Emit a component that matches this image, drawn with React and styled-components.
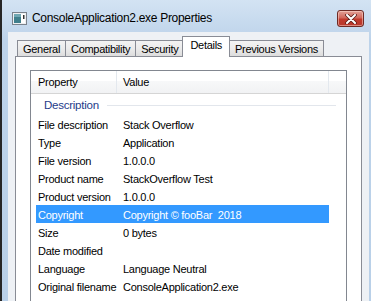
import React from "react";
import styled, { createGlobalStyle } from "styled-components";

const GlobalStyle = createGlobalStyle`
  html, body {
    margin: 0;
    padding: 0;
  }
  body {
    width: 371px;
    height: 301px;
    overflow: hidden;
    background: #ffffff;
    font-family: "Liberation Sans", Arial, sans-serif;
  }
`;

const Desktop = styled.div`
  display: flex;
  height: 301px;
  overflow: hidden;
`;

const DesktopEdge = styled.div`
  width: 2px;
  background: #262626;
`;

const Window = styled.div`
  flex: 1;
  display: flex;
  flex-direction: column;
  background: linear-gradient(#d3e3f3, #bdd3ea 40px, #b9d0e8);
`;

const TitleBar = styled.div`
  height: 32px;
  box-sizing: border-box;
  display: flex;
  align-items: flex-start;
  padding: 10px 7px 0 10px;
`;

const TitleIcon = styled.svg`
  width: 15px;
  height: 13px;
  margin-top: 2px;
  flex-shrink: 0;
`;

const TitleText = styled.div`
  flex: 1;
  margin-left: 5px;
  font-size: 12px;
  letter-spacing: -0.3px;
  line-height: 17px;
  color: #000;
`;

const CloseButton = styled.div`
  width: 27px;
  height: 17px;
  box-sizing: border-box;
  border: 1px solid #6e2a24;
  border-radius: 3px;
  background: linear-gradient(#e2a197, #d2675b 45%, #c1392c 55%, #b8392e);
  box-shadow: inset 0 0 0 1px rgba(255, 220, 210, 0.5);
  display: flex;
  align-items: center;
  justify-content: center;
`;

const Client = styled.div`
  flex: 1;
  display: flex;
  flex-direction: column;
  margin: 0 2px 0 6px;
  background: #eef1f5;
  padding: 5px 7px 0 7px;
  min-height: 0;
`;

const TabRow = styled.div`
  display: flex;
  align-items: flex-end;
  height: 20px;
  padding-left: 2px;
  margin-bottom: -1px;
  position: relative;
  z-index: 1;
`;

const Tab = styled.div`
  box-sizing: border-box;
  height: ${(p) => (p.$active ? "21px" : "17px")};
  padding: 0 ${(p) => (p.$active ? "7px" : "5px")};
  margin: 0 -1px 0 ${(p) => (p.$active ? "-1px" : "0")};
  border: 1px solid #898c95;
  border-bottom: ${(p) => (p.$active ? "none" : "1px solid #898c95")};
  background: ${(p) =>
    p.$active ? "#ffffff" : "linear-gradient(#f3f3f3, #ebebeb 50%, #dddddd)"};
  position: relative;
  z-index: ${(p) => (p.$active ? 2 : 1)};
  font-size: 11px;
  letter-spacing: -0.3px;
  line-height: 16px;
  color: #000;
  white-space: nowrap;
`;

const Panel = styled.div`
  flex: 1;
  border: 1px solid #898c95;
  border-bottom: none;
  background: #ffffff;
  padding: 13px 14px 0 14px;
  min-height: 0;
  overflow: hidden;
`;

const ListView = styled.div`
  border: 1px solid #828790;
  border-bottom: none;
  height: 100%;
  box-sizing: border-box;
  font-size: 11px;
  letter-spacing: -0.25px;
  color: #000;
`;

const Header = styled.div`
  display: flex;
  height: 22px;
  border-bottom: 1px solid #d5d5d5;
  background: linear-gradient(#ffffff, #ffffff 45%, #f7f8f9 45%, #f1f2f4);
`;

const HeaderCell = styled.div`
  box-sizing: border-box;
  width: ${(p) => p.$width}px;
  padding-left: ${(p) => p.$pad}px;
  border-right: 1px solid #e3e8ee;
  line-height: 22px;
`;

const GroupRow = styled.div`
  display: flex;
  align-items: center;
  height: 21px;
  padding: 1px 10px 0 13px;
  box-sizing: border-box;
`;

const GroupTitle = styled.span`
  color: #1e3b8a;
  font-size: 11.5px;
`;

const GroupLine = styled.div`
  flex: 1;
  height: 1px;
  margin-left: 8px;
  background: #e2e6ec;
`;

const Row = styled.div`
  display: flex;
  align-items: center;
  width: 293px;
  height: 18px;
  padding-top: 1px;
  box-sizing: border-box;
  margin-left: 5px;
  background: ${(p) => (p.$selected ? "#3399ff" : "transparent")};
  color: ${(p) => (p.$selected ? "#ffffff" : "#000000")};
`;

const KeyCell = styled.div`
  width: 85px;
  padding-left: 2px;
  white-space: nowrap;
`;

const ValueCell = styled.div`
  white-space: pre;
`;

const tabs = ["General", "Compatibility", "Security", "Details", "Previous Versions"];

const rows = [
  ["File description", "Stack Overflow"],
  ["Type", "Application"],
  ["File version", "1.0.0.0"],
  ["Product name", "StackOverflow Test"],
  ["Product version", "1.0.0.0"],
  ["Copyright", "Copyright \u00a9 fooBar  2018", true],
  ["Size", "0 bytes"],
  ["Date modified", ""],
  ["Language", "Language Neutral"],
  ["Original filename", "ConsoleApplication2.exe"],
];

export default function App() {
  return (
    <Desktop>
      <GlobalStyle />
      <DesktopEdge />
      <Window>
        <TitleBar>
          <TitleIcon viewBox="0 0 15 13">
            <rect x="0.5" y="0.5" width="14" height="12" fill="#eef0f2" stroke="#7a828c" />
            <rect x="2" y="2" width="7" height="9" fill="#3f7f8c" />
            <rect x="2" y="2" width="7" height="3" fill="#6fa7b3" />
            <rect x="9" y="2" width="4" height="9" fill="#ffffff" />
            <rect x="11" y="3" width="1.5" height="4" fill="#333" />
          </TitleIcon>
          <TitleText>ConsoleApplication2.exe Properties</TitleText>
          <CloseButton>
            <svg width="12" height="10" viewBox="0 0 12 10">
              <path
                d="M2 1 L10 9 M10 1 L2 9"
                stroke="#5a1d18"
                strokeWidth="3.6"
                strokeLinecap="round"
              />
              <path
                d="M2 1 L10 9 M10 1 L2 9"
                stroke="#ffffff"
                strokeWidth="2"
                strokeLinecap="round"
              />
            </svg>
          </CloseButton>
        </TitleBar>
        <Client>
          <TabRow>
            {tabs.map((t) => (
              <Tab key={t} $active={t === "Details"}>
                {t}
              </Tab>
            ))}
          </TabRow>
          <Panel>
            <ListView>
              <Header>
                <HeaderCell $width={86} $pad={7}>Property</HeaderCell>
                <HeaderCell $width={212} $pad={6}>Value</HeaderCell>
              </Header>
              <GroupRow>
                <GroupTitle>Description</GroupTitle>
                <GroupLine />
              </GroupRow>
              {rows.map(([k, v, sel], i) => (
                <Row key={i} $selected={sel}>
                  <KeyCell>{k}</KeyCell>
                  <ValueCell>{v}</ValueCell>
                </Row>
              ))}
            </ListView>
          </Panel>
        </Client>
      </Window>
    </Desktop>
  );
}
